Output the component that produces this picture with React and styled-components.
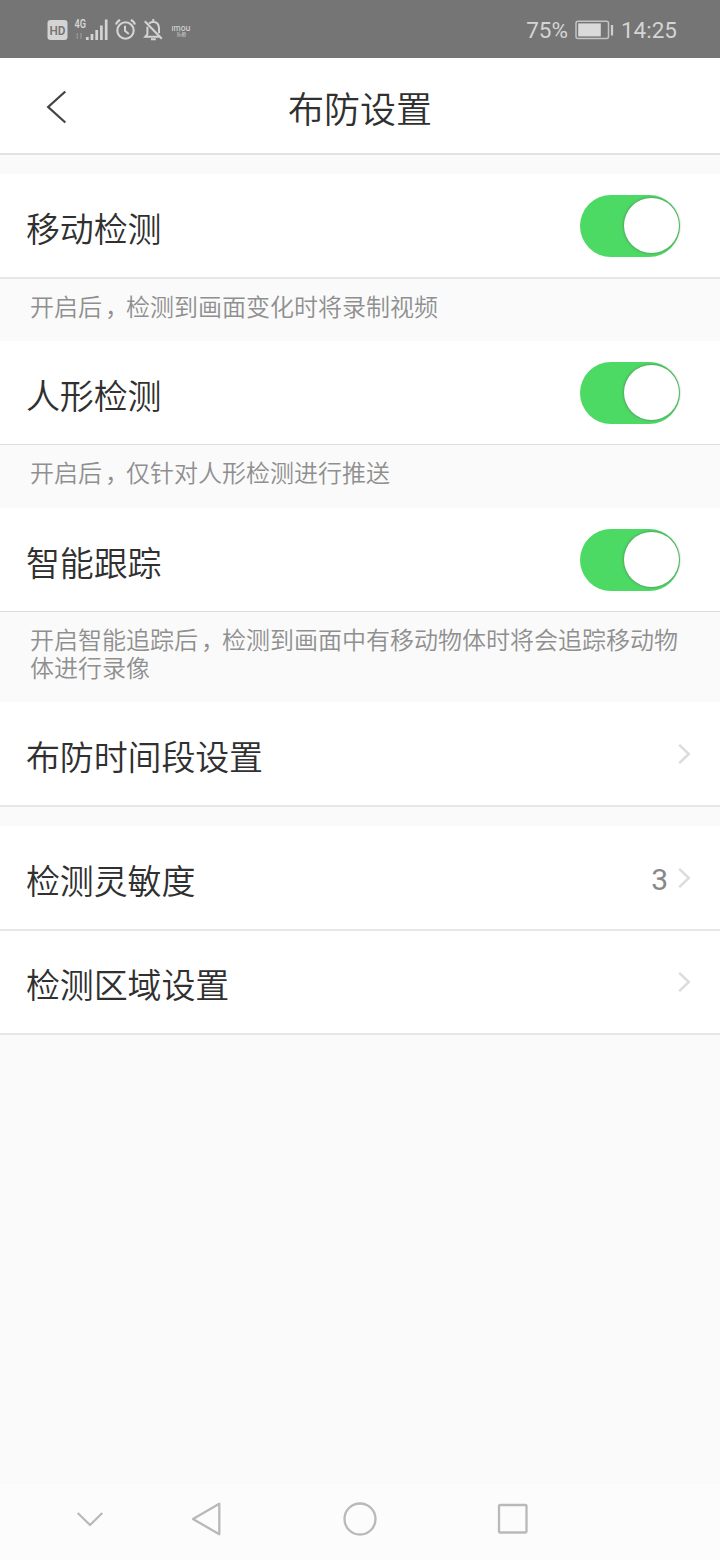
import React from "react";
import styled, { createGlobalStyle } from "styled-components";

const GlobalStyle = createGlobalStyle`
  * { box-sizing: border-box; }
  body {
    margin: 0;
    background: #fafafa;
    font-family: Roboto, "Noto Sans CJK SC", sans-serif;
    font-weight: 350;
    color: #303030;
  }
`;

const Screen = styled.div`
  display: flex;
  flex-direction: column;
  width: 720px;
  height: 1560px;
  background: #fafafa;
  overflow: hidden;
`;

const StatusBar = styled.div`
  display: flex;
  align-items: center;
  justify-content: space-between;
  height: 58px;
  padding: 2px 43px 0 46px;
  background: #757575;
  color: #d4d4d4;
`;

const StatusGroup = styled.div`
  display: flex;
  align-items: center;
  gap: 7px;
`;

const StatusText = styled.span`
  font-size: 22.5px;
  font-weight: 400;
  line-height: 28px;
`;

const StatusIcon = styled.svg`
  display: block;
  overflow: visible;
`;

const Header = styled.header`
  display: grid;
  grid-template-columns: 100px 1fr 100px;
  align-items: center;
  height: 97px;
  background: #fff;
  border-bottom: 2px solid #e2e2e2;
`;

const BackButton = styled.button`
  display: flex;
  align-items: center;
  height: 95px;
  padding: 2px 0 0 45px;
  border: 0;
  background: none;
`;

const Title = styled.h1`
  margin: 0;
  padding-top: 10px;
  text-align: center;
  font-size: 36px;
  line-height: 50px;
  font-weight: 350;
`;

const Gap = styled.div`
  height: 19px;
`;

const Row = styled.div`
  display: flex;
  align-items: center;
  justify-content: space-between;
  height: ${(p) => p.$height || 104}px;
  padding: 0 ${(p) => (p.$link ? 28 : 40)}px 0 26px;
  background: #fff;
  border-bottom: ${(p) => p.$line || 1}px solid ${(p) => (p.$line === 2 ? "#e7e7e7" : "#dedede")};
`;

const Label = styled.span`
  padding-top: 8px;
  font-size: 34px;
  line-height: 48px;
  letter-spacing: -0.15px;
`;

const Hint = styled.p`
  margin: 0;
  height: ${(p) => p.$height}px;
  padding: 15px 30px 0 30px;
  font-size: 24px;
  line-height: 28px;
  color: #8f8f8f;
`;

const Comma = styled.span`
  margin: 0 9px 0 3px;
  font-feature-settings: "halt";
`;

const Switch = styled.button`
  display: flex;
  justify-content: flex-end;
  align-items: center;
  width: 100px;
  height: 62px;
  padding: 0 1px 0 0;
  border: 0;
  border-radius: 31px;
  background: #4cd964;
`;

const Knob = styled.span`
  width: 55px;
  height: 55px;
  border-radius: 50%;
  background: #fff;
  box-shadow: 0 0 2px 1px rgba(90, 130, 95, 0.55);
`;

const Trailing = styled.div`
  display: flex;
  align-items: center;
  gap: 10px;
`;

const Value = styled.span`
  padding-top: 4px;
  font-size: 30px;
  font-weight: 400;
  line-height: 36px;
  color: #888;
`;

const NavBar = styled.nav`
  display: flex;
  align-items: center;
  height: 76px;
  margin-top: auto;
  padding: 0 0 6px 76px;
  background: #fcfcfc;
`;

const NavIcon = styled.svg`
  display: block;
  margin-right: ${(p) => p.$after}px;
  fill: none;
  stroke: #b9b9b9;
  stroke-width: 2.3;
  stroke-linejoin: round;
`;

const Chevron = () => (
  <svg width="14" height="22" viewBox="0 0 14 22" fill="none" stroke="#dcdcdc" strokeWidth="2.5">
    <path d="M1.2 1.8L10.8 11L1.2 20.2" />
  </svg>
);

const StatusIcons = () => (
  <StatusIcon width="146" height="28" viewBox="46 16 146 28" fill="none" stroke="#d4d4d4">
    <rect x="47.5" y="20" width="20" height="20" rx="3" fill="#d4d4d4" stroke="none" />
    <text x="57.5" y="35.2" textAnchor="middle" fontSize="13.5" fontWeight="600" fontFamily="Roboto" fill="#757575" stroke="none" textLength="16" lengthAdjust="spacingAndGlyphs">HD</text>
    <text x="74.5" y="27.8" fontSize="12" fontWeight="600" fontFamily="Roboto" fill="#d4d4d4" stroke="none" textLength="11.5" lengthAdjust="spacingAndGlyphs">4G</text>
    <path d="M77.3 33v6M81 33v6" stroke="#929292" strokeWidth="1.5" />
    <path d="M87.3 37v3M92 34v6M96.7 30v10M101.4 25.5v14.5M106.2 19.5v20.5" strokeWidth="2.7" />
    <circle cx="125.5" cy="30.5" r="8.2" strokeWidth="2.1" />
    <path d="M125 25.7v5.1l3.8 3.2" strokeWidth="2" />
    <path d="M116 24.5q1-3.4 4.2-4.5M135 24.5q-1-3.4-4.2-4.5" strokeWidth="2.1" />
    <path d="M149 23.7q1.5-1.7 4.3-2q5.4.4 5.7 6.3v5.3M147.4 26.8v7.4l-2.1 2.5h14.3M153.3 19v2.5M151 39.2h4.8" strokeWidth="2" />
    <path d="M144.8 21.3L161.8 38.7" strokeWidth="2.1" />
    <text x="171.5" y="30.5" fontSize="8.5" fontFamily="Inter" fontWeight="500" fill="#d4d4d4" stroke="none" textLength="19" lengthAdjust="spacingAndGlyphs">ımou</text>
    <text x="176.5" y="36.3" fontSize="4.8" fontFamily="Noto Sans CJK SC" fontWeight="500" fill="#c4c4c4" stroke="none">乐橙</text>
  </StatusIcon>
);

const Battery = () => (
  <StatusIcon width="39" height="20" viewBox="0 0 39 20">
    <rect x="1" y="1.2" width="32.5" height="17.4" rx="2" fill="none" stroke="#c4c4c4" strokeWidth="1.5" />
    <rect x="3.2" y="3.4" width="22.6" height="13" fill="#dadada" />
    <path d="M37 5v10.5" stroke="#cfcfcf" strokeWidth="2.2" />
  </StatusIcon>
);

const Toggle = () => (
  <Switch role="switch" aria-checked="true">
    <Knob />
  </Switch>
);

export default function App() {
  return (
    <>
      <GlobalStyle />
      <Screen>
        <StatusBar>
          <StatusIcons />
          <StatusGroup>
            <StatusText>75%</StatusText>
            <Battery />
            <StatusText>14:25</StatusText>
          </StatusGroup>
        </StatusBar>

        <Header>
          <BackButton aria-label="返回">
            <svg width="22" height="34" viewBox="0 0 22 34" fill="none" stroke="#444" strokeWidth="2.3">
              <path d="M20.3 1.5L3.2 17L20.3 32.5" />
            </svg>
          </BackButton>
          <Title>布防设置</Title>
        </Header>

        <Gap />
        <Row $height={105} $line={2}>
          <Label>移动检测</Label>
          <Toggle />
        </Row>
        <Hint $height={62}>开启后<Comma>，</Comma>检测到画面变化时将录制视频</Hint>

        <Row>
          <Label>人形检测</Label>
          <Toggle />
        </Row>
        <Hint $height={63}>开启后<Comma>，</Comma>仅针对人形检测进行推送</Hint>

        <Row>
          <Label>智能跟踪</Label>
          <Toggle />
        </Row>
        <Hint $height={90}>开启智能追踪后<Comma>，</Comma>检测到画面中有移动物体时将会追踪移动物体进行录像</Hint>

        <Row $link $height={105} $line={2}>
          <Label>布防时间段设置</Label>
          <Chevron />
        </Row>
        <Gap />
        <Row $link $height={105} $line={2}>
          <Label>检测灵敏度</Label>
          <Trailing>
            <Value>3</Value>
            <Chevron />
          </Trailing>
        </Row>
        <Row $link $line={2}>
          <Label>检测区域设置</Label>
          <Chevron />
        </Row>

        <NavBar>
          <NavIcon $after={87} width="28" height="18" viewBox="0 0 28 18">
            <path d="M1.7 3L14 15L26.3 3" />
          </NavIcon>
          <NavIcon $after={121} width="30" height="36" viewBox="0 0 30 36">
            <path d="M2 18L28.3 2.7V33.3Z" />
          </NavIcon>
          <NavIcon $after={119} width="36" height="36" viewBox="0 0 36 36">
            <circle cx="18" cy="18" r="15.5" />
          </NavIcon>
          <NavIcon $after={0} width="32" height="32" viewBox="0 0 32 32">
            <rect x="2" y="2" width="27.5" height="27.5" rx="1" />
          </NavIcon>
        </NavBar>
      </Screen>
    </>
  );
}
